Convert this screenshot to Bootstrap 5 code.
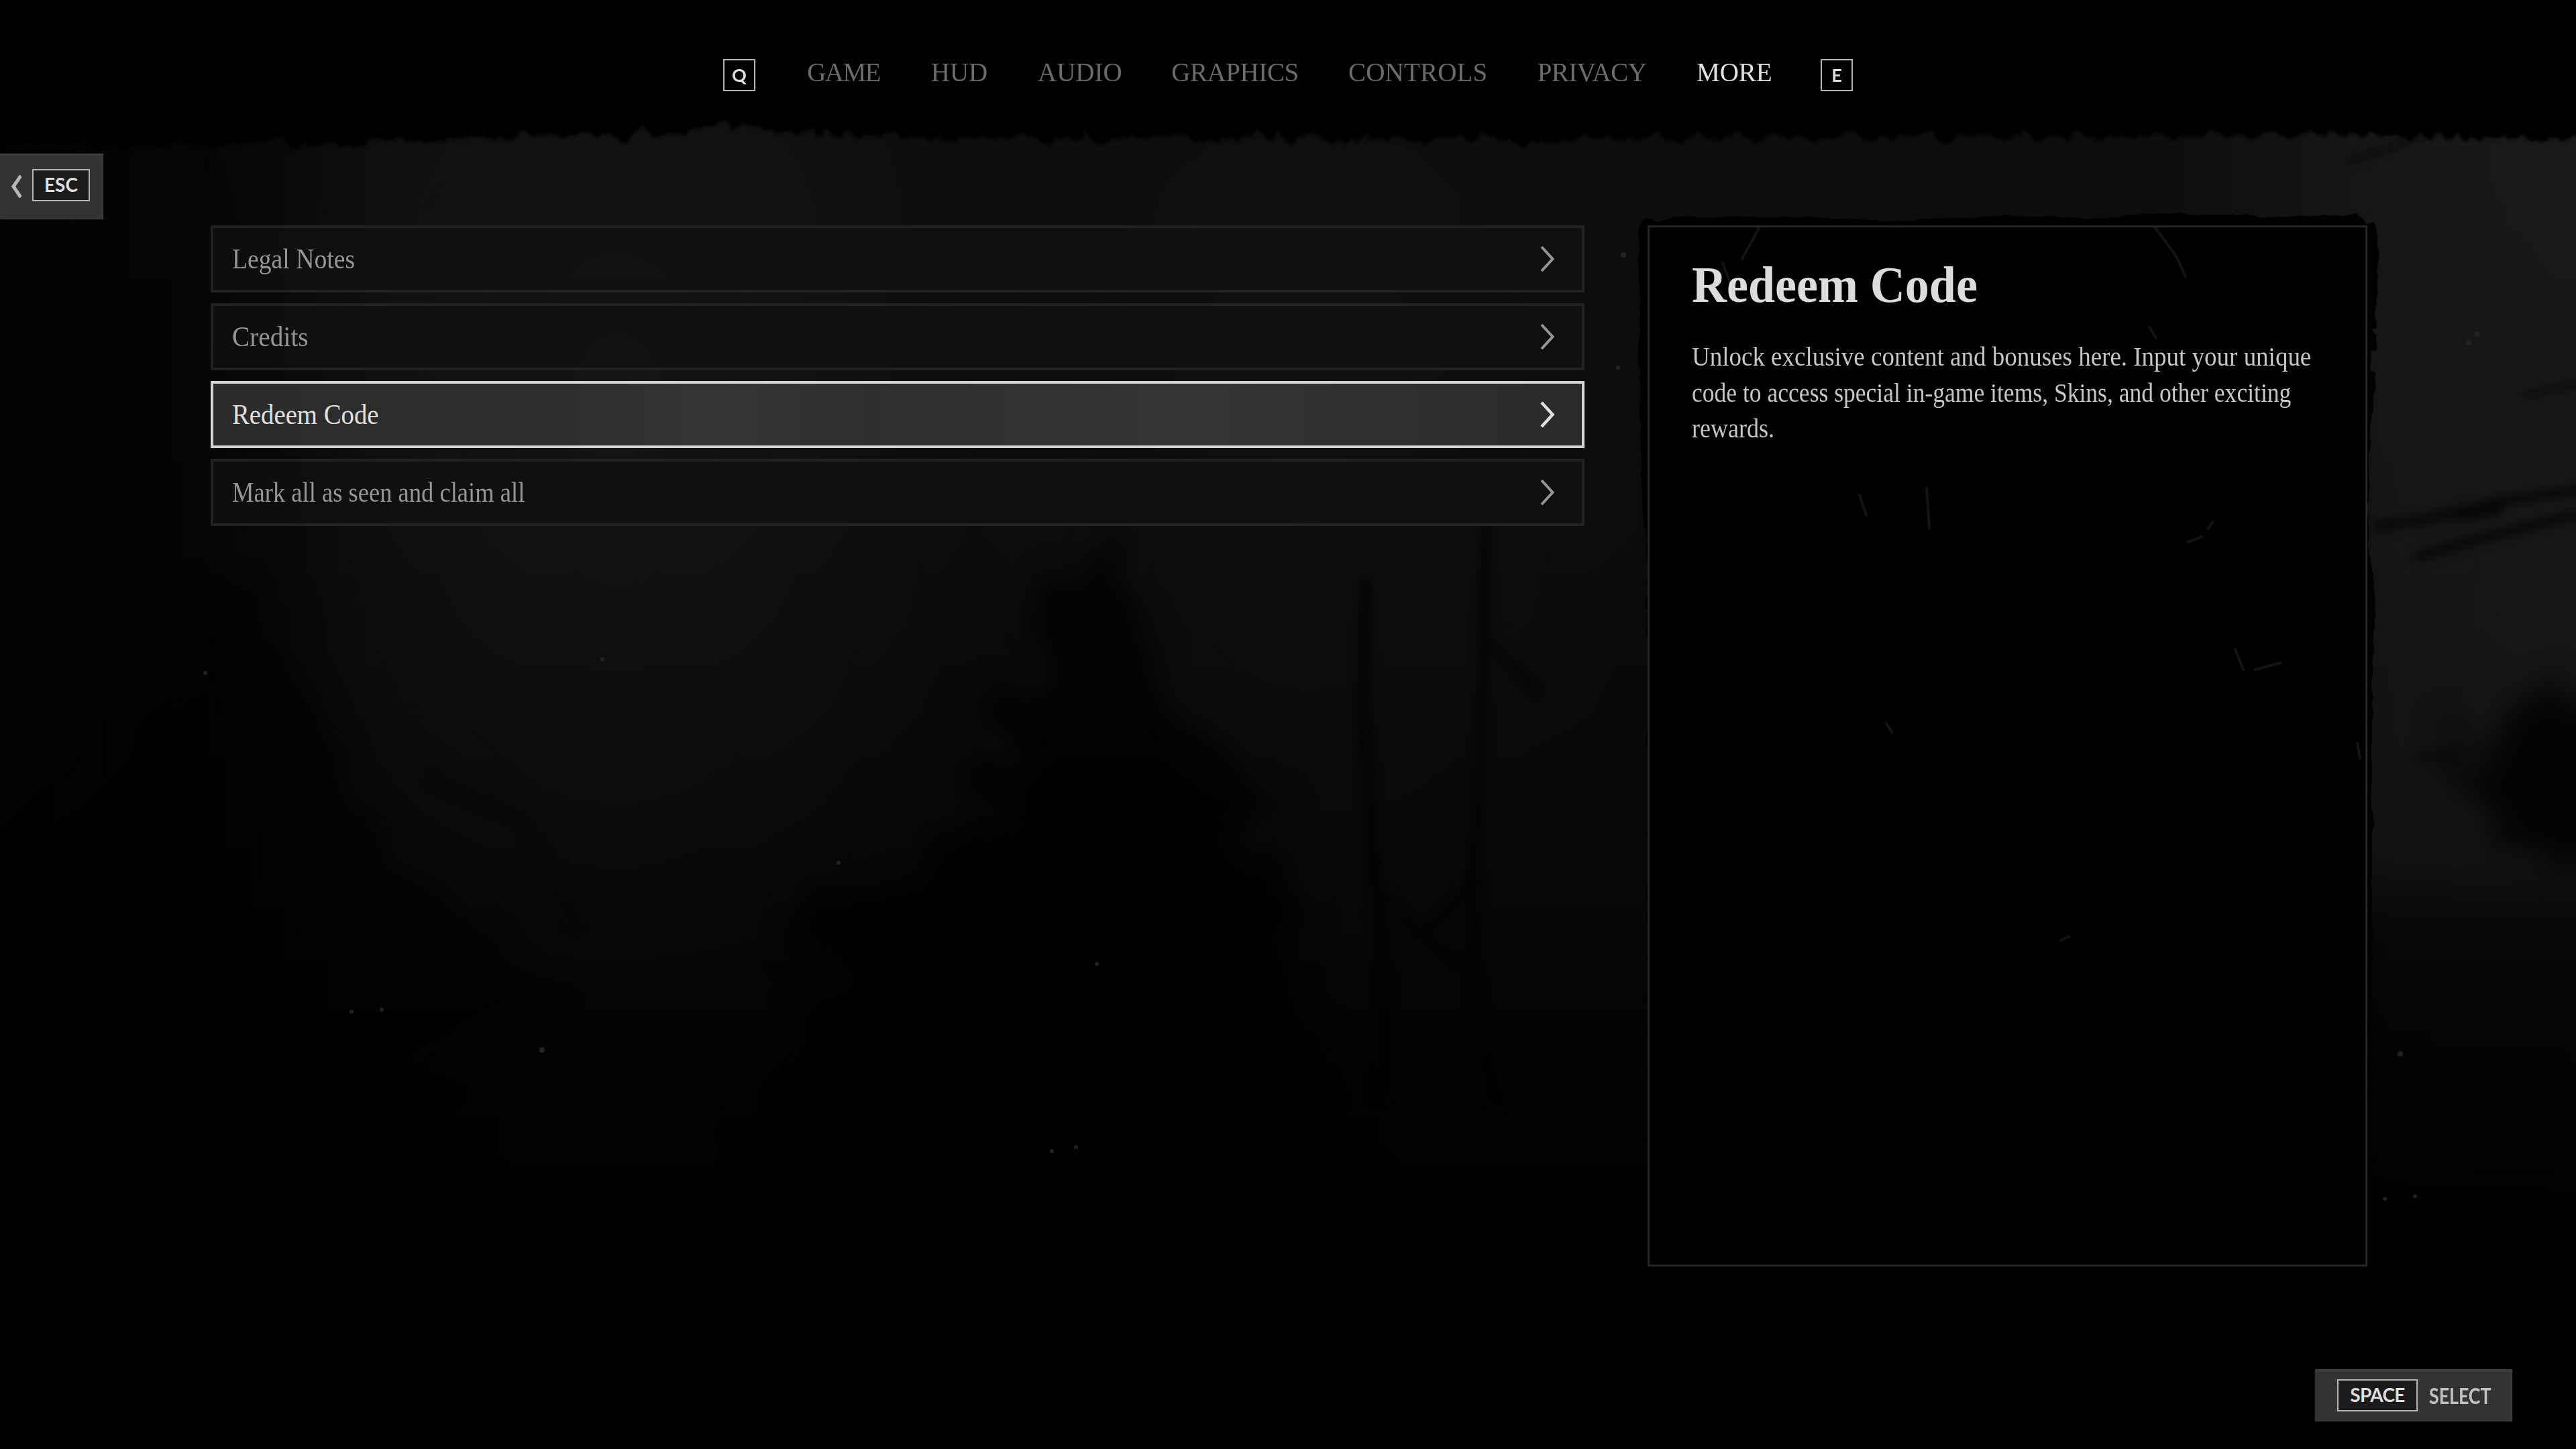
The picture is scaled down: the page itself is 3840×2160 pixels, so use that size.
<!DOCTYPE html>
<html lang="en">
<head>
<meta charset="utf-8">
<meta name="viewport" content="width=device-width, initial-scale=1">
<title>Options - More</title>
<link rel="stylesheet" href="https://cdn.jsdelivr.net/npm/bootstrap@5.3.0/dist/css/bootstrap.min.css">
<style>
  body { background: #000; color: #dcdcdc; font-family: "Liberation Serif", "Noto Sans CJK SC", serif; }
  .screen { width: 3840px; height: 2160px; }
  .backdrop { inset: 0; width: 3840px; height: 2160px; z-index: 0; }
  .layer { z-index: 1; }

  /* top tabs */
  .topbar { height: 224px; padding: 88px 0 0 1078px; }
  .tabs { gap: 74px; }
  .tabs .nav-link { padding: 0; font-size: 39px; line-height: 39px; color: #6c6c6c; white-space: nowrap; text-align: center; }
  .tabs .nav-link.active { color: #e2e2e2; }
  .t-game { width: 111px; margin-left: 2px; letter-spacing: -1.6px; }
  .t-hud { width: 86px; }
  .t-audio { width: 125px; }
  .t-graphics { width: 190px; letter-spacing: -.4px; }
  .t-controls { width: 207px; letter-spacing: .2px; }
  .t-privacy { width: 164px; letter-spacing: -.5px; }
  .t-more { width: 111px; }

  /* keyboard hints */
  .keycap { height: 48px; border: 2px solid #b4b4b4; font: 700 28px/43px Lato, sans-serif; color: #dedede; text-align: center; background: #1b1b1b; }
  .keycap-sm { width: 48px; background: #000; font-size: 27px; }
  .keycap-esc { width: 86px; }
  .keycap-space { width: 120px; letter-spacing: -.6px; }
  .plate { background: #333; box-shadow: inset 0 3px 2px #3d3d3d, inset -3px 0 2px #3b3b3b, 0 0 2px #222; }
  .back-plate { width: 154px; height: 98px; margin-top: 5px; padding: 23px 0 0 16px; gap: 16px; }
  .back-plate svg { margin-top: 8px; }
  .select-plate { width: 294px; height: 78px; padding: 15px 0 0 33px; gap: 17px; }
  .select-label { width: 92px; font: 700 32px/50px Lato, sans-serif; color: #c2c2c2; transform: scaleX(.835); transform-origin: left; }
  .footer-bar { padding: 0 95px 41px 0; }

  /* menu entries */
  .menu-list { width: 2048px; margin: 112px 0 0 160px; }
  .menu-list .menu-entry { height: 100px; border: 4px solid #222; padding: 0 40px 0 28px; background: rgba(16,16,16,.8); color: #959595; font-size: 42px; line-height: 50px; }
  .menu-list .menu-entry.active { border-color: #d2d2d2; color: #e0e0e0; background: linear-gradient(90deg, #2c2c2c 0, #2d2d2d 25%, #353535 37%, #2e2e2e 48%, #323232 60%, #343434 72%, #2a2a2a 100%); }
  .menu-entry span, .fit { display: inline-block; transform-origin: left; white-space: nowrap; }
  .menu-entry:nth-child(1) span { transform: scaleX(.897); }
  .menu-entry:nth-child(2) span { transform: scaleX(.937); }
  .menu-entry:nth-child(3) span { transform: scaleX(.923); }
  .menu-entry:nth-child(4) span { transform: scaleX(.87); }

  /* details */
  .details { width: 1073px; height: 1552px; margin: 112px 0 0 94px; border: 3px solid #252525; padding: 45px 0 0 63px; }
  .details-shade { left: -27px; top: -31px; width: 1140px; height: 1640px; z-index: -1; }
  .details h1 { font-size: 77px; line-height: 80px; font-weight: 700; margin: 0 0 41px; color: #dcdcdc; }
  .details h1 .fit { transform: scaleX(.935); }
  .details p { font-size: 41px; line-height: 53.5px; color: #c6c6c6; }
  .ln-1 { transform: scaleX(.902); }
  .ln-2 { transform: scaleX(.867); }
  .ln-3 { transform: scaleX(.878); }
</style>
</head>
<body class="overflow-hidden">
<div class="screen position-relative d-flex flex-column overflow-hidden">

  <!-- night forest -->
  <svg class="backdrop position-absolute" viewBox="0 0 3840 2160" color-interpolation-filters="sRGB" aria-hidden="true">
    <defs>
      <linearGradient id="sky" x1="0" y1="0" x2="0" y2="1">
        <stop offset=".1" stop-color="#0d0d0d"/><stop offset=".35" stop-color="#0b0b0b"/>
        <stop offset=".6" stop-color="#070707"/><stop offset=".85" stop-color="#000"/>
      </linearGradient>
      <radialGradient id="mist"><stop offset="0" stop-color="#fff" stop-opacity=".035"/><stop offset=".5" stop-color="#fff" stop-opacity=".02"/><stop offset="1" stop-color="#fff" stop-opacity="0"/></radialGradient>
      <linearGradient id="leftdark"><stop offset="0" stop-color="#000" stop-opacity=".75"/><stop offset=".45" stop-color="#000" stop-opacity=".65"/><stop offset="1" stop-color="#000" stop-opacity="0"/></linearGradient>
      <linearGradient id="sideglow"><stop offset="0" stop-color="#fff" stop-opacity="0"/><stop offset=".6" stop-color="#fff" stop-opacity=".045"/><stop offset="1" stop-color="#fff" stop-opacity=".05"/></linearGradient>
      <linearGradient id="sidefloor" x1="0" y1="0" x2="0" y2="1"><stop offset="0" stop-color="#000" stop-opacity="0"/><stop offset=".2" stop-color="#000" stop-opacity=".6"/><stop offset="1" stop-color="#000"/></linearGradient>
      <filter id="tree" x="-50%" y="-50%" width="200%" height="200%"><feTurbulence type="fractalNoise" baseFrequency=".012" numOctaves="3" seed="4"/><feDisplacementMap in="SourceGraphic" scale="160" xChannelSelector="R" yChannelSelector="G"/><feGaussianBlur stdDeviation="20"/></filter>
      <filter id="soft" x="-20%" y="-20%" width="140%" height="140%"><feGaussianBlur stdDeviation="7"/></filter>
      <filter id="tear" x="-2%" y="-10%" width="104%" height="120%"><feTurbulence type="fractalNoise" baseFrequency=".035 .02" numOctaves="4" seed="8"/><feDisplacementMap in="SourceGraphic" scale="38" xChannelSelector="R" yChannelSelector="G"/><feGaussianBlur stdDeviation="2"/></filter>
    </defs>
    <rect width="3840" height="2160" fill="url(#sky)"/>
    <ellipse cx="920" cy="620" rx="560" ry="900" fill="url(#mist)"/>
    <ellipse cx="1950" cy="700" rx="560" ry="800" fill="url(#mist)" opacity=".45"/>
    <rect width="560" height="2160" fill="url(#leftdark)"/>
    <rect x="3200" y="150" width="640" height="2010" fill="url(#sideglow)"/>
    <rect x="3200" y="1270" width="640" height="620" fill="url(#sidefloor)"/>
    <rect x="3200" y="1889" width="640" height="271"/>
    <g filter="url(#tree)">
      <path d="M1640 720 1560 1000 1470 1080 1530 1100 1400 1260 1150 1380 1240 1420 1100 1760H2050L1900 1420 1990 1390 1850 1220 1930 1190 1760 1080 1700 960z" opacity=".8"/>
      <path d="M360 840 200 1120 0 1300V1900H760L620 1540 830 1500 560 1280z" opacity=".6"/>
      <path d="M3920 990 3780 1040 3640 1090 3740 1110 3600 1170 3740 1190 3700 1240 3780 1300 3920 1290z" opacity=".8"/>
    </g>
    <g filter="url(#soft)" fill="none" stroke="#000">
      <path d="M2034 860Q2030 1120 2052 1330T2056 1640" stroke-width="16" opacity=".7"/>
      <path d="M2215 780Q2212 1100 2198 1280T2232 1650" stroke-width="12" opacity=".75"/>
      <path d="M2066 1330Q2110 1410 2206 1442M2196 1290Q2180 1350 2122 1390M2222 960 2290 1030" stroke-width="8" opacity=".7"/>
      <path d="M3540 785 3610 775 3740 745 3850 730M3600 830 3690 805 3850 765M3660 770 3730 760" stroke-width="12" opacity=".7"/>
      <path d="M3500 240 3560 222 3630 190M3600 1130 3660 1125M3760 590 3850 570" stroke-width="8" opacity=".6"/>
      <path d="M300 220Q330 330 400 420M640 1160 780 1220 860 1380" stroke-width="14" opacity=".3"/>
    </g>
    <g fill="#222">
      <circle cx="306" cy="1003" r="3"/><circle cx="898" cy="983" r="3"/><circle cx="1250" cy="1286" r="3"/><circle cx="808" cy="1565" r="4"/>
      <circle cx="1635" cy="1437" r="3"/><circle cx="1568" cy="1716" r="3"/><circle cx="1604" cy="1710" r="3"/><circle cx="524" cy="1508" r="3"/>
      <circle cx="569" cy="1505" r="3"/><circle cx="3578" cy="1571" r="4"/><circle cx="3555" cy="1787" r="3"/><circle cx="3600" cy="1783" r="3"/>
      <circle cx="2420" cy="380" r="4"/><circle cx="2412" cy="548" r="3"/><circle cx="3693" cy="498" r="4"/><circle cx="3680" cy="511" r="4"/>
    </g>
    <path filter="url(#tear)" d="M-40-60H3880V211L3500 200 3200 204 2700 203 2300 208 1900 204 1400 207 1250 200 1060 186 980 202 780 202 520 212 200 214-40 218z"/>
  </svg>

  <header class="topbar layer">
    <ul class="nav tabs flex-nowrap align-items-start">
      <li class="keycap keycap-sm">Q</li>
      <li class="nav-item t-game"><a class="nav-link">GAME</a></li>
      <li class="nav-item t-hud"><a class="nav-link">HUD</a></li>
      <li class="nav-item t-audio"><a class="nav-link">AUDIO</a></li>
      <li class="nav-item t-graphics"><a class="nav-link">GRAPHICS</a></li>
      <li class="nav-item t-controls"><a class="nav-link">CONTROLS</a></li>
      <li class="nav-item t-privacy"><a class="nav-link">PRIVACY</a></li>
      <li class="nav-item t-more"><a class="nav-link active">MORE</a></li>
      <li class="keycap keycap-sm">E</li>
    </ul>
  </header>

  <main class="d-flex align-items-start layer">
    <div class="plate back-plate d-flex align-items-start flex-shrink-0">
      <svg width="16" height="36" viewBox="0 0 16 36" fill="none" stroke="#b8b8b8" stroke-width="5"><path d="M15 2 4 18 15 34"/></svg>
      <div class="keycap keycap-esc">ESC</div>
    </div>

    <div class="list-group menu-list d-flex flex-column gap-3 flex-shrink-0">
      <a class="menu-entry text-decoration-none d-flex align-items-center justify-content-between"><span>Legal Notes</span>
        <svg width="24" height="44" viewBox="0 0 24 44" fill="none" stroke="currentColor" stroke-width="4"><path d="M4 4 20.500 22 4 40"/></svg></a>
      <a class="menu-entry text-decoration-none d-flex align-items-center justify-content-between"><span>Credits</span>
        <svg width="24" height="44" viewBox="0 0 24 44" fill="none" stroke="currentColor" stroke-width="4"><path d="M4 4 20.500 22 4 40"/></svg></a>
      <a class="menu-entry active text-decoration-none d-flex align-items-center justify-content-between"><span>Redeem Code</span>
        <svg width="24" height="44" viewBox="0 0 24 44" fill="none" stroke="currentColor" stroke-width="4.500"><path d="M4 4 20.500 22 4 40"/></svg></a>
      <a class="menu-entry text-decoration-none d-flex align-items-center justify-content-between"><span>Mark all as seen and claim all</span>
        <svg width="24" height="44" viewBox="0 0 24 44" fill="none" stroke="currentColor" stroke-width="4"><path d="M4 4 20.500 22 4 40"/></svg></a>
    </div>

    <section class="details position-relative flex-shrink-0">
      <svg class="details-shade position-absolute" viewBox="0 0 1140 1640" color-interpolation-filters="sRGB" aria-hidden="true">
        <defs><filter id="rough" x="-2%" y="-2%" width="104%" height="104%"><feTurbulence type="fractalNoise" baseFrequency=".02 .03" numOctaves="3" seed="3"/><feDisplacementMap in="SourceGraphic" scale="9" xChannelSelector="R" yChannelSelector="G"/></filter></defs>
        <path filter="url(#rough)" d="M12 30 22 16 40 22 60 14 300 16 420 20 560 15 720 18 780 10 1000 16 1080 12 1098 26 1108 24 1112 50 1110 180 1102 182 1110 190 1110 214 1102 216V244L1110 246 1106 300 1100 340 1098 500 1108 580 1104 700 1104 1600H24V560L14 380 12 200z"/>
        <g fill="none" stroke="#131313" stroke-width="4" stroke-linecap="round">
          <path d="M190 32 165 78M136 84 152 126M780 30 812 74 826 104M772 180 782 196M380 770 388 784M900 660 912 690M930 690 968 680M1082 800 1086 822M640 1094 652 1088M340 430 350 460M830 500 850 492M860 480 866 470M440 420 444 480"/>
        </g>
      </svg>
      <h1><span class="fit">Redeem Code</span></h1>
      <p class="m-0"><span class="fit ln-1">Unlock exclusive content and bonuses here. Input your unique</span><br>
        <span class="fit ln-2">code to access special in-game items, Skins, and other exciting</span><br>
        <span class="fit ln-3">rewards.</span></p>
    </section>
  </main>

  <footer class="footer-bar mt-auto d-flex justify-content-end layer">
    <div class="plate select-plate d-flex align-items-start">
      <div class="keycap keycap-space flex-shrink-0">SPACE</div>
      <div class="select-label">SELECT</div>
    </div>
  </footer>
</div>
<script src="https://cdn.jsdelivr.net/npm/bootstrap@5.3.0/dist/js/bootstrap.bundle.min.js"></script>
</body>
</html>
